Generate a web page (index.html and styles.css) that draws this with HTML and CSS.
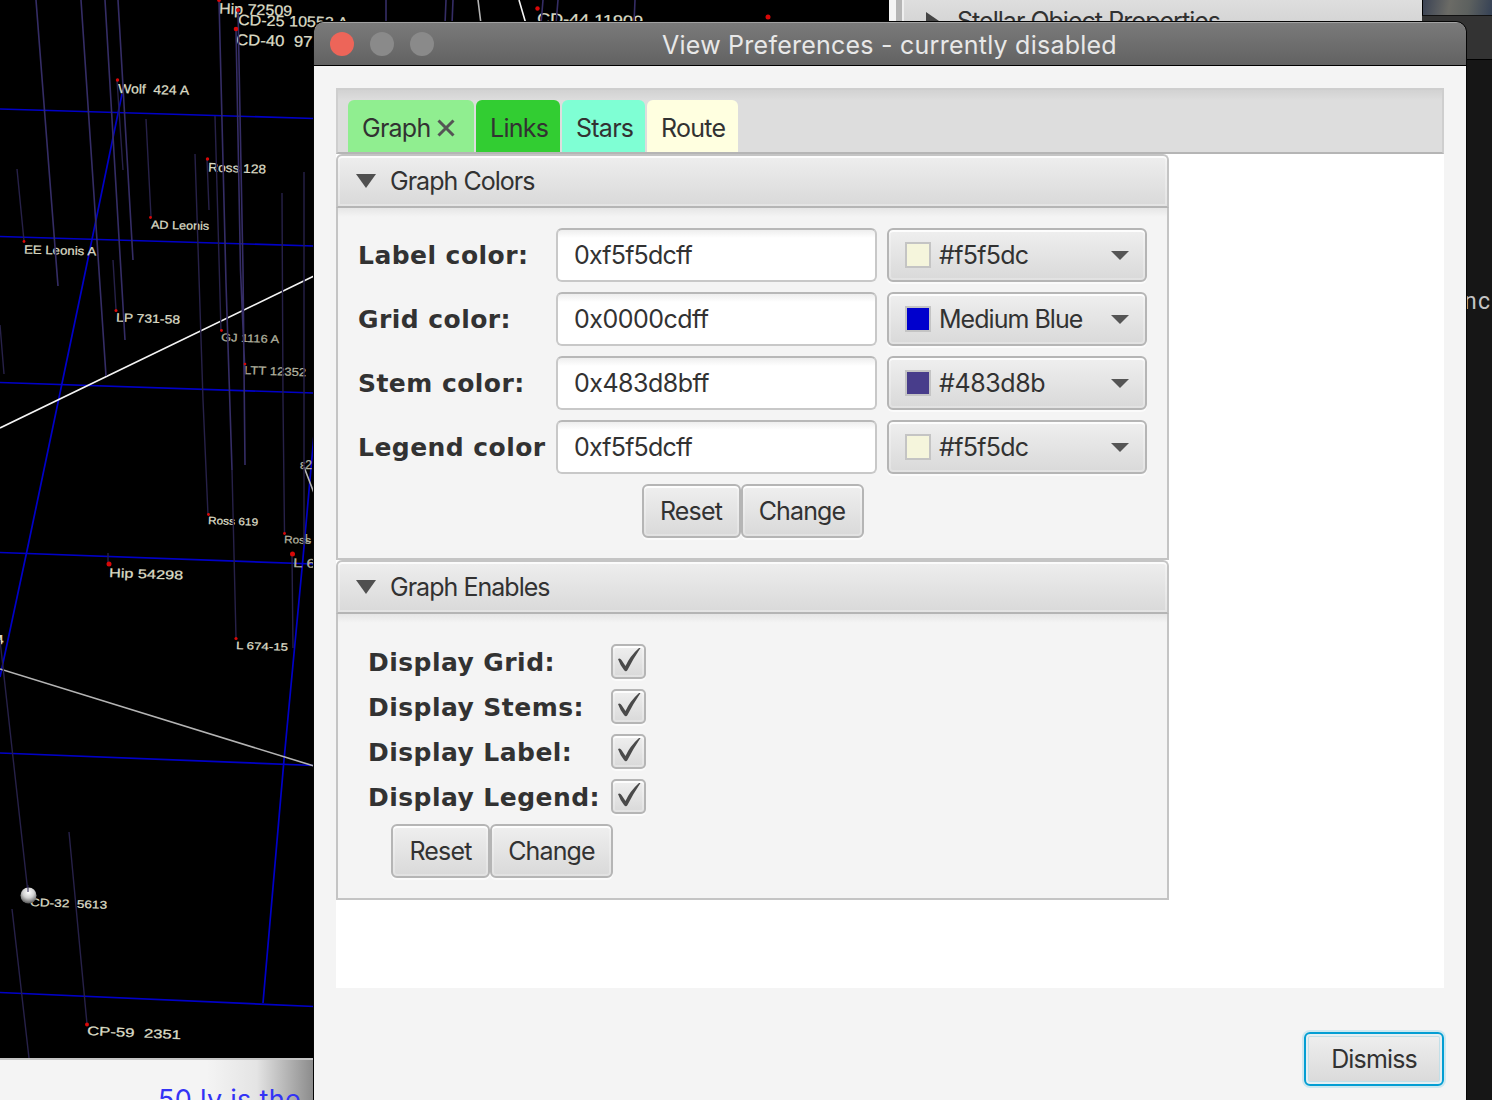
FILE: index.html
```html
<!DOCTYPE html>
<html lang="en">
<head>
<meta charset="utf-8">
<title>View Preferences</title>
<link rel="stylesheet" href="styles.css">
</head>
<body>
<main class="desktop">
  <svg class="plot" viewBox="0 0 890 1058" width="890" height="1058">
    <g class="grid">
      <path d="M0 109L314 118.500M0 236.500L314 246M0 382.500L314 393M0 552.500L314 564M0 753L314 765.500M0 992.500L314 1006.500"/>
      <path d="M122 94L83 283L28 546L0 677M318 390L303 558L284 760L263 1003"/>
    </g>
    <g class="labels">
      <text x="219" y="13.500" textLength="73" lengthAdjust="spacingAndGlyphs" transform="rotate(2 219 13)" font-size="15">Hip 72509</text>
      <text x="238" y="25" textLength="110" lengthAdjust="spacingAndGlyphs" transform="rotate(1.500 238 25)" font-size="15">CD-25 10553 A</text>
      <text x="236" y="45" textLength="95" lengthAdjust="spacingAndGlyphs" transform="rotate(1.500 236 45)" font-size="15.500" xml:space="preserve">CD-40  9712</text>
      <text x="118" y="93" textLength="71" lengthAdjust="spacingAndGlyphs" transform="rotate(1.500 118 93)" font-size="13" xml:space="preserve">Wolf  424 A</text>
      <text x="208" y="171.500" textLength="58" lengthAdjust="spacingAndGlyphs" transform="rotate(2 208 171)" font-size="12.500">Ross 128</text>
      <text x="151" y="228.500" textLength="58" lengthAdjust="spacingAndGlyphs" transform="rotate(1.500 151 228)" font-size="11.500">AD Leonis</text>
      <text x="24" y="253.500" textLength="72" lengthAdjust="spacingAndGlyphs" transform="rotate(1.500 24 253)" font-size="12">EE Leonis A</text>
      <text x="116" y="321.500" textLength="64" lengthAdjust="spacingAndGlyphs" transform="rotate(2 116 321)" font-size="12">LP 731-58</text>
      <text x="221" y="341" textLength="58" lengthAdjust="spacingAndGlyphs" transform="rotate(2 221 341)" font-size="11" class="dim">GJ 1116 A</text>
      <text x="244" y="374" textLength="62" lengthAdjust="spacingAndGlyphs" transform="rotate(2 244 374)" font-size="11.500" class="dim">LTT 12352</text>
      <text x="208" y="524" textLength="50" lengthAdjust="spacingAndGlyphs" transform="rotate(2 208 524)" font-size="10.500">Ross 619</text>
      <text x="284" y="543" textLength="50" lengthAdjust="spacingAndGlyphs" transform="rotate(2 284 543)" font-size="10.500" class="dim">Ross 614</text>
      <text x="305" y="542" font-size="11" class="dim">L 7</text>
      <text x="109" y="577" textLength="74" lengthAdjust="spacingAndGlyphs" transform="rotate(2 109 577)" font-size="12.500">Hip 54298</text>
      <text x="293" y="567" textLength="65" lengthAdjust="spacingAndGlyphs" transform="rotate(2 293 567)" font-size="12.500" class="dim">L 674-14</text>
      <text x="-4" y="644" font-size="13" class="strong">4</text>
      <text x="236" y="649" textLength="52" lengthAdjust="spacingAndGlyphs" transform="rotate(2 236 649)" font-size="10.500">L 674-15</text>
      <text x="30" y="906" textLength="77" lengthAdjust="spacingAndGlyphs" transform="rotate(2 30 906)" font-size="11" xml:space="preserve">CD-32  5613</text>
      <text x="87" y="1035" textLength="94" lengthAdjust="spacingAndGlyphs" transform="rotate(2.500 87 1035)" font-size="12.500" xml:space="preserve">CP-59  2351</text>
      <text x="300" y="469" font-size="12" class="dim">&#949;2</text>
      <text x="537" y="23.500" textLength="106" lengthAdjust="spacingAndGlyphs" transform="rotate(1.500 537 23)" font-size="15">CD-44 11909</text>
    </g>
    <g class="links">
      <path d="M0 428L314 276M519 0L526 24"/>
      <path class="soft" d="M0 669L314 766M304 467L314 493M478 0L481 24"/>
    </g>
    <g class="stems">
      <path d="M36 0L58 286M81 0L106 376M105 0L125 340M118 0L133 260M219 0L226 283L232 470M238 10L243 270L245 465M236 29L240.500 270L245 374M386 0V24M446 0L445 24M453 0L452 24M543 0L541 24M558 0L556 24M635 0L634 24"/>
      <path class="thin" d="M117 80L123 170M17 169L24 241M146 119L151 217M207 159L209 210M195 154L203 400L208 515M215 116L221 331M282 193L283 400L284.500 533M304 172V545M113 260L116 310M0 325L4 374M232 470L236 638M108 553V562M292 555L293 648M0 640L28 893M69 832L87 1024M12 909L29 1058"/>
    </g>
    <g class="stars">
      <circle cx="238" cy="10" r="2"/><circle cx="236" cy="29" r="2.300"/><circle cx="219" cy="0" r="2"/>
      <circle cx="117.500" cy="80" r="1.700"/><circle cx="207.500" cy="159" r="1.700"/><circle cx="150.500" cy="217.500" r="1.400"/>
      <circle cx="24" cy="241.500" r="1.400"/><circle cx="116" cy="310.500" r="1.500"/><circle cx="221.500" cy="330.500" r="1.400"/>
      <circle cx="245" cy="364" r="1.300"/><circle cx="208.500" cy="514.500" r="1.400"/><circle cx="284.500" cy="533.500" r="1.400"/>
      <circle cx="109" cy="564" r="2.500"/><circle cx="292.500" cy="554" r="2.500"/><circle cx="236" cy="638.500" r="1.600"/>
      <circle cx="87" cy="1024.500" r="2"/><circle cx="537.500" cy="8.500" r="2.200"/><circle cx="768" cy="17" r="2.500"/>
    </g>
    <defs>
      <radialGradient id="ball" cx=".5" cy=".3" r=".7"><stop offset="0" stop-color="#fff"/><stop offset=".5" stop-color="#d0d0d0"/><stop offset="1" stop-color="#555"/></radialGradient>
    </defs>
    <circle cx="28.500" cy="895.500" r="8" fill="url(#ball)"/>
    <path d="M28 885V892" stroke="#2a2450"/>
  </svg>

  <div class="legend-bar"><span class="scale">50 ly is the</span></div>

  <aside class="side-panel">
    <svg width="14" height="18" viewBox="0 0 14 18"><path d="M1 0L14 9L1 18Z"/></svg>
    <span>Stellar Object Properties</span>
  </aside>
  <div class="backdrop"><div class="photo"></div><div class="toolbar"></div><div class="editor"><span>nc</span></div></div>

  <section class="dialog">
    <header class="titlebar">
      <i class="light close"></i><i class="light"></i><i class="light"></i>
      <h1>View Preferences - currently disabled</h1>
    </header>
    <div class="body">
      <div class="tabpane">
        <nav class="tabs">
          <div class="tab graph"><span>Graph</span><svg width="18" height="18" viewBox="0 0 18 18"><path d="M1.500 1.500L16.500 16.500M16.500 1.500L1.500 16.500"/></svg></div>
          <div class="tab links-tab"><span>Links</span></div>
          <div class="tab stars-tab"><span>Stars</span></div>
          <div class="tab route"><span>Route</span></div>
        </nav>
        <div class="pane">
          <div class="pane-title"><svg width="20" height="15" viewBox="0 0 20 15"><path d="M0 0H20L10 14Z"/></svg><span>Graph Colors</span></div>
          <div class="pane-body">
            <div class="form">
              <label>Label color:</label><div class="field">0xf5f5dcff</div>
              <div class="combo"><i class="swatch beige"></i><span class="code">#f5f5dc</span><svg width="18" height="10" viewBox="0 0 18 10"><path d="M0 0H18L9 9Z"/></svg></div>
              <label>Grid color:</label><div class="field digits">0x0000cdff</div>
              <div class="combo"><i class="swatch blue"></i><span>Medium Blue</span><svg width="18" height="10" viewBox="0 0 18 10"><path d="M0 0H18L9 9Z"/></svg></div>
              <label>Stem color:</label><div class="field digits">0x483d8bff</div>
              <div class="combo"><i class="swatch slate"></i><span class="digits">#483d8b</span><svg width="18" height="10" viewBox="0 0 18 10"><path d="M0 0H18L9 9Z"/></svg></div>
              <label>Legend color</label><div class="field">0xf5f5dcff</div>
              <div class="combo"><i class="swatch beige"></i><span class="code">#f5f5dc</span><svg width="18" height="10" viewBox="0 0 18 10"><path d="M0 0H18L9 9Z"/></svg></div>
            </div>
            <div class="actions centered"><div class="button reset">Reset</div><div class="button change">Change</div></div>
          </div>
        </div>
        <div class="pane">
          <div class="pane-title"><svg width="20" height="15" viewBox="0 0 20 15"><path d="M0 0H20L10 14Z"/></svg><span>Graph Enables</span></div>
          <div class="pane-body enables">
            <div class="checks">
              <label>Display Grid:</label><div class="check"><svg width="24" height="24" viewBox="0 0 24 24"><path d="M1 11Q3 9.500 4.500 12L8.500 18Q13 8 22 0H23.500Q16 11 10.500 22Q9 24.500 7 22Q3 17 1 11Z"/></svg></div>
              <label>Display Stems:</label><div class="check"><svg width="24" height="24" viewBox="0 0 24 24"><path d="M1 11Q3 9.500 4.500 12L8.500 18Q13 8 22 0H23.500Q16 11 10.500 22Q9 24.500 7 22Q3 17 1 11Z"/></svg></div>
              <label>Display Label:</label><div class="check"><svg width="24" height="24" viewBox="0 0 24 24"><path d="M1 11Q3 9.500 4.500 12L8.500 18Q13 8 22 0H23.500Q16 11 10.500 22Q9 24.500 7 22Q3 17 1 11Z"/></svg></div>
              <label>Display Legend:</label><div class="check"><svg width="24" height="24" viewBox="0 0 24 24"><path d="M1 11Q3 9.500 4.500 12L8.500 18Q13 8 22 0H23.500Q16 11 10.500 22Q9 24.500 7 22Q3 17 1 11Z"/></svg></div>
            </div>
            <div class="actions indented"><div class="button reset">Reset</div><div class="button change">Change</div></div>
          </div>
        </div>
      </div>
      <footer><div class="button dismiss">Dismiss</div></footer>
    </div>
  </section>
</main>
</body>
</html>
```
FILE: styles.css
```css
* { box-sizing: border-box; }
body { margin: 0; background: #000; }
.desktop {
  position: relative; width: 1492px; height: 1100px; overflow: hidden;
  background: #000; color: #323232;
  font: 25px/30px Inter, "Liberation Sans", sans-serif; letter-spacing: -.97px;
  white-space: nowrap;
}
.plot { position: absolute; left: 0; top: 0; fill: none; font-family: "Liberation Sans", Arial, sans-serif; letter-spacing: 0; }
.grid { stroke: #0000c8; stroke-width: 1.7; }
.labels { fill: #dcdcc6; stroke: #dcdcc6; stroke-width: .25; }
.labels .dim { fill: #b0b09e; stroke: #b0b09e; }
.labels .strong { font-weight: bold; }
.links { stroke: #f4f4f4; stroke-width: 1.6; }
.links .soft { stroke: #b4b4b4; }
.stems { stroke: #352d66; stroke-width: 1.6; }
.stems .thin { stroke: #272149; stroke-width: 1.4; }
.stars { fill: #d80808; }

.legend-bar {
  position: absolute; left: 0; top: 1058px; width: 313px; height: 42px;
  border-top: 2px solid #c4c4c4; overflow: hidden; padding: 25px 0 0 158px;
  background: linear-gradient(90deg, #f4f4f4 66%, #e4e4e4 82%, #8c8c8c);
}
.scale { color: #3333f5; letter-spacing: .3px; font-size: 27px; display: block; }

.side-panel {
  position: absolute; left: 889px; top: 0; width: 533px; height: 24px;
  display: flex; align-items: flex-start; overflow: hidden;
  background: linear-gradient(90deg, #f4f4f4 0 7px, #b5b5b5 7px 13px, #efefef 13px 15px, transparent 15px), linear-gradient(#dedede, #d4d4d4);
  padding: 6px 0 0 36px;
}
.side-panel svg { margin-top: 6px; fill: #444; flex: none; }
.side-panel span { margin-left: 18px; letter-spacing: -.97px; }

.backdrop { position: absolute; left: 1422px; top: 0; width: 70px; height: 1100px; background: #161616; }
.photo { height: 16px; border-left: 1px solid #000; border-bottom: 1px solid #111; background: linear-gradient(100deg, #3b4354, #6b6b66 38%, #5d615f 65%, #354155); }
.toolbar { height: 44px; background: #333; border-bottom: 1px solid #000; }
.editor { padding: 227px 0 0 42px; color: #c4c4c4; font: 23px/30px "Roboto", sans-serif; letter-spacing: 1.2px; }

.dialog {
  position: absolute; left: 314px; top: 22px; width: 1152px; height: 1090px;
  background: #f4f4f4; border-radius: 10px 10px 0 0; overflow: hidden;
  outline: 1px solid #050505;
}
.titlebar {
  display: flex; align-items: center; gap: 16px; height: 44px; padding-left: 16px;
  background: linear-gradient(#7a7a7a, #626262); border-top: 1px solid #a2a2a2; border-bottom: 1px solid #000;
}
.light { width: 24px; height: 24px; border-radius: 50%; background: #8a8a8a; }
.light.close { background: #ed6559; }
.titlebar h1 { margin: 0 0 0 212px; padding-top: 2px; color: #e8e8e8; font-size: 25px; font-weight: 400; letter-spacing: .24px; }

.body { padding: 22px; }
.tabpane { height: 900px; background: #fff; }
.tabs {
  display: flex; align-items: flex-end; gap: 2px; height: 66px; padding: 0 0 0 10px;
  background: linear-gradient(#d2d2d2, #ddd 10px);
  border: 2px solid #cecece; border-bottom-color: #b5b5b5;
}
.tab { display: flex; align-items: center; height: 52px; border-radius: 6px 6px 0 0; padding: 4px 0 0 14px; letter-spacing: -.75px; }
.tab.graph { width: 126px; background: #90ee90; }
.tab svg { margin-left: auto; margin-right: 19px; fill: none; stroke: #555; stroke-width: 3; }
.links-tab { width: 84px; background: #32cd32; }
.stars-tab { width: 83px; background: #7fffd4; }
.route { width: 91px; background: #ffffe0; }

.pane { width: 833px; }
.pane-title {
  display: flex; align-items: center; height: 54px; padding-left: 18px;
  border: 2px solid #c4c4c4; border-bottom-color: #b5b5b5; border-radius: 6px 6px 0 0;
  background: linear-gradient(#eee, #d9d9d9); box-shadow: inset 0 0 0 2px rgba(255,255,255,.3), inset 0 2px #fafafa;
}
.pane-title svg { fill: #505050; flex: none; }
.pane-title span { margin-left: 14px; }
.pane-body {
  padding: 20px 20px; border: 2px solid #c4c4c4; border-top: 0;
  background: linear-gradient(#e6e6e6, #f4f4f4 9px);
}
.form { display: grid; grid-template-columns: 188px 321px 260px; grid-auto-rows: 54px; gap: 10px; align-items: center; }
label { font: bold 25px/30px "DejaVu Sans", Verdana, sans-serif; letter-spacing: .45px; padding-top: 2px; }
.field {
  height: 54px; border: 2px solid #c8c8c8; border-top-color: #b8b8b8; border-radius: 6px;
  padding: 10px 16px; background: linear-gradient(#eee, #fff 8px); letter-spacing: -.8px;
}
.field.digits { letter-spacing: -.5px; }
.combo .digits { letter-spacing: -.4px; }
.combo .code { letter-spacing: -.7px; }
.combo, .button, .check {
  border: 2px solid #b5b5b5; border-radius: 6px; background: linear-gradient(#efefef, #d9d9d9);
  box-shadow: inset 0 0 0 2px rgba(255,255,255,.25), inset 0 2px #fcfcfc, 0 2px #fbfbfb;
}
.combo { display: flex; align-items: center; height: 54px; padding: 0 16px; }
.swatch { width: 26px; height: 26px; border: 2px solid #c4c4c4; margin-right: 8px; }
.beige { background: #f5f5dc; }
.blue { background: #0000cd; }
.slate { background: #483d8b; }
.combo svg { margin-left: auto; margin-top: 2px; fill: #555; }
.actions { display: flex; margin-top: 10px; }
.centered { justify-content: center; }
.indented { padding-left: 23px; }
.button { height: 54px; padding-top: 10px; text-align: center; letter-spacing: -.85px; }
.reset { width: 99px; }
.change { width: 123px; }
.enables { padding: 30px 30px 20px; }
.checks { display: grid; grid-template-columns: 233px 35px; grid-auto-rows: 35px; gap: 10px; align-items: center; }
.checks label { padding-top: 3px; }
.check { height: 35px; display: grid; place-items: center; border-radius: 5px; }
.check svg { fill: #4a4a4a; margin: -3px 0 0 1px; }
footer { display: flex; justify-content: flex-end; padding-top: 44px; }
.dismiss { width: 140px; border-color: #039ed3; box-shadow: 0 0 0 2px #cde8f0, inset 0 0 0 2px #e6eff2, inset 0 0 0 3px #c2dfe8; }
```
